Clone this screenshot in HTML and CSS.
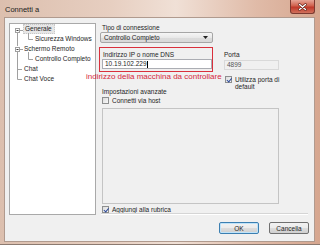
FILE: index.html
```html
<!DOCTYPE html>
<html>
<head>
  <link rel="stylesheet" href="styles.css">
</head>
<body>
  <div class="window">
    <!-- barra del titolo -->
    <div class="titlebar">
      <span class="title">Connetti a</span>
      <div class="close">
        <svg width="9" height="8" viewBox="0 0 9 8">
          <path d="M1.5 1.5 L7.5 6.5 M7.5 1.5 L1.5 6.5" stroke="#5a2018" stroke-width="2.6" stroke-linecap="round"/>
          <path d="M1.5 1.5 L7.5 6.5 M7.5 1.5 L1.5 6.5" stroke="#fff" stroke-width="1.4" stroke-linecap="round"/>
        </svg>
      </div>
    </div>

    <div class="client">
      <div class="main">
        <!-- albero delle categorie -->
        <div class="tree">
          <svg class="tree-lines" width="30" height="60" viewBox="0 0 30 60">
            <g stroke="#a0a0a0" stroke-width="1" fill="none">
              <path d="M7.5 9 V22 M7.5 27 V55.5 M7.5 45.5 H12 M7.5 55.5 H12 M10 6.5 H13 M10 25.5 H13"/>
              <path d="M18.5 9 V15.5 H23 M18.5 28 V35.5 H23"/>
              <rect x="5.5" y="4.5" width="4" height="4" fill="#fff"/>
              <rect x="5.5" y="23.5" width="4" height="4" fill="#fff"/>
            </g>
            <path d="M6.5 6.5 H8.5 M6.5 25.5 H8.5" stroke="#404040" stroke-width="1"/>
          </svg>
          <ul class="tree-list">
            <li class="node selected">Generale</li>
            <li class="node sub">Sicurezza Windows</li>
            <li class="node">Schermo Remoto</li>
            <li class="node sub">Controllo Completo</li>
            <li class="node">Chat</li>
            <li class="node">Chat Voce</li>
          </ul>
        </div>

        <!-- impostazioni -->
        <div class="settings">
          <div class="lbl">Tipo di connessione</div>
          <div class="select">
            <span>Controllo Completo</span>
            <svg width="5" height="3" viewBox="0 0 5 3"><path d="M0 0 H5 L2.5 3 Z" fill="#222"/></svg>
          </div>

          <div class="row">
            <div class="addr-box">
              <div class="lbl">Indirizzo IP o nome DNS</div>
              <div class="input">10.19.102.229<span class="caret"></span></div>
            </div>
            <div class="port">
              <div class="lbl">Porta</div>
              <div class="input disabled">4899</div>
              <div class="check checked">
                <span class="box"></span>
                <span>Utilizza porta di<br>default</span>
              </div>
            </div>
          </div>

          <div class="lbl advanced">Impostazioni avanzate</div>
          <div class="check">
            <span class="box"></span>
            <span>Connetti via host</span>
          </div>
          <div class="textarea"></div>
          <div class="check checked bottom-check">
            <span class="box"></span>
            <span>Aggiungi alla rubrica</span>
          </div>
          <div class="separator"></div>
        </div>
      </div>

      <div class="buttons">
        <button class="btn default">OK</button>
        <button class="btn">Cancella</button>
      </div>
    </div>

    <!-- nota in rosso sopra lo screenshot -->
    <div class="annotation">indirizzo della macchina da controllare</div>
  </div>
</body>
</html>
```

FILE: styles.css
```css
/* pagina */
body {
  margin: 0;
  background: #ffffff;
  font-family: "Liberation Sans", Arial, sans-serif;
}

/* finestra con cornice aero */
.window {
  position: relative;
  width: 320px;
  height: 245px;
  box-sizing: border-box;
  display: flex;
  flex-direction: column;
  background: linear-gradient(90deg, #dcbfae 0%, #e7cfc1 35%, #f0e0d6 55%, #e0bba8 80%, #d6a68f 100%);
  border-bottom: 1px solid #8c7a70;
}

/* barra del titolo */
.titlebar {
  height: 17px;
  display: flex;
  align-items: center;
  justify-content: space-between;
  padding-left: 5px;
}

.title {
  font-size: 7.5px;
  color: #1b1b1b;
  margin-top: 1px;
}

.close {
  width: 25px;
  height: 14px;
  margin-right: 5px;
  align-self: flex-start;
  display: flex;
  align-items: center;
  justify-content: center;
  background: linear-gradient(180deg, #e6a597 0%, #d0614d 45%, #c0392a 55%, #d0705c 100%);
  border: 1px solid #7c3a30;
  border-top: none;
  border-radius: 0 0 3px 3px;
  box-sizing: border-box;
}

/* area interna */
.client {
  flex: 1;
  margin: 0 5px 2px 4px;
  background: #f0f0f0;
  border: 1px solid #b09a8e;
  padding: 5px 5px 0 4px;
  display: flex;
  flex-direction: column;
  font-size: 6.5px;
  color: #1e1e1e;
}

.main {
  display: flex;
  height: 192px;
}

/* albero */
.tree {
  position: relative;
  width: 87px;
  box-sizing: border-box;
  background: #fff;
  border: 1px solid #a9a9a9;
}

.tree-lines {
  position: absolute;
  left: 0;
  top: 0;
}

.tree-list {
  list-style: none;
  margin: 0;
  padding: 0;
}

.node {
  height: 10px;
  line-height: 10px;
  padding-left: 14px;
  white-space: nowrap;
}

.node.sub {
  padding-left: 25px;
}

.node.selected {
  display: table;
  margin-left: 13px;
  padding: 0 2px 0 1px;
  background: #e6e6e6;
  border: 1px dotted #c8c8c8;
  height: 8px;
  line-height: 8px;
}

/* colonna impostazioni */
.settings {
  margin-left: 4px;
  flex: 1;
  display: flex;
  flex-direction: column;
  align-items: flex-start;
}

.lbl {
  line-height: 7px;
  margin-top: 1px;
  padding-left: 2px;
  white-space: nowrap;
}

.select {
  margin-top: 1px;
  width: 113px;
  height: 11px;
  box-sizing: border-box;
  border: 1px solid #a6a6a6;
  border-radius: 2px;
  background: linear-gradient(180deg, #f6f6f6 0%, #e9e9e9 50%, #dcdcdc 51%, #d9d9d9 100%);
  display: flex;
  align-items: center;
  justify-content: space-between;
  padding: 0 4px 0 3px;
}

.row {
  display: flex;
  margin-top: 4px;
  margin-left: -1px;
}

.addr-box {
  width: 114px;
  height: 25px;
  box-sizing: border-box;
  border: 1px solid #d9303c;
  padding-top: 3px;
  padding-left: 2px;
}

.addr-box .lbl {
  margin-top: 0;
  padding-left: 1px;
}

.input {
  margin-top: 1px;
  width: 110px;
  height: 10px;
  box-sizing: border-box;
  border: 1px solid #abadb3;
  background: #fff;
  padding-left: 2px;
  line-height: 8px;
  display: flex;
  align-items: center;
}

.caret {
  width: 1px;
  height: 7px;
  background: #000;
}

.port {
  margin-left: 11px;
  padding-top: 4px;
}

.port .lbl {
  margin-top: 0;
  padding-left: 0;
}

.input.disabled {
  margin-top: 2px;
  width: 55px;
  height: 10px;
  background: #f0f0f0;
  border-color: #d9d9d9;
  color: #555;
}

/* caselle di controllo */
.check {
  display: flex;
  align-items: center;
  gap: 3px;
  margin-top: 2px;
  margin-left: 2px;
  line-height: 7px;
  white-space: nowrap;
}

.box {
  width: 7px;
  height: 7px;
  box-sizing: border-box;
  border: 1px solid #8e8f8f;
  background: linear-gradient(135deg, #dcdcdc, #f8f8f8);
  position: relative;
}

.check.checked .box::after {
  content: "";
  position: absolute;
  left: 1.5px;
  top: 0;
  width: 1.5px;
  height: 3.5px;
  border: solid #2c4a9a;
  border-width: 0 1px 1px 0;
  transform: rotate(40deg);
}

.port .check {
  margin-top: 6px;
  margin-left: 1px;
  align-items: flex-start;
}

.port .check .box {
  margin-top: 0;
}

.advanced {
  margin-top: -2px;
}

.textarea {
  margin-top: 4px;
  margin-left: 2px;
  width: 177px;
  height: 96px;
  box-sizing: border-box;
  border: 1px solid #c4c4c4;
  background: #f0f0f0;
}

.bottom-check {
  margin-top: 2px;
}

.separator {
  margin-top: auto;
  margin-left: 1px;
  width: 207px;
  border-top: 1px solid #d5d5d5;
  border-bottom: 1px solid #fff;
}

/* pulsanti */
.buttons {
  display: flex;
  justify-content: flex-end;
  gap: 10px;
  margin-top: 7px;
}

.btn {
  width: 40px;
  height: 12px;
  padding: 0;
  font-family: inherit;
  font-size: 6.5px;
  color: #1e1e1e;
  border: 1px solid #707070;
  border-radius: 2px;
  background: linear-gradient(180deg, #f2f2f2 0%, #ebebeb 50%, #dddddd 51%, #cfcfcf 100%);
}

.btn.default {
  border-color: #3c7fb1;
  box-shadow: inset 0 0 0 1px #bfe3f9;
}

/* annotazione rossa */
.annotation {
  position: absolute;
  left: 86px;
  top: 72px;
  font-size: 8px;
  line-height: 10px;
  color: #d6283e;
  white-space: nowrap;
}
```
